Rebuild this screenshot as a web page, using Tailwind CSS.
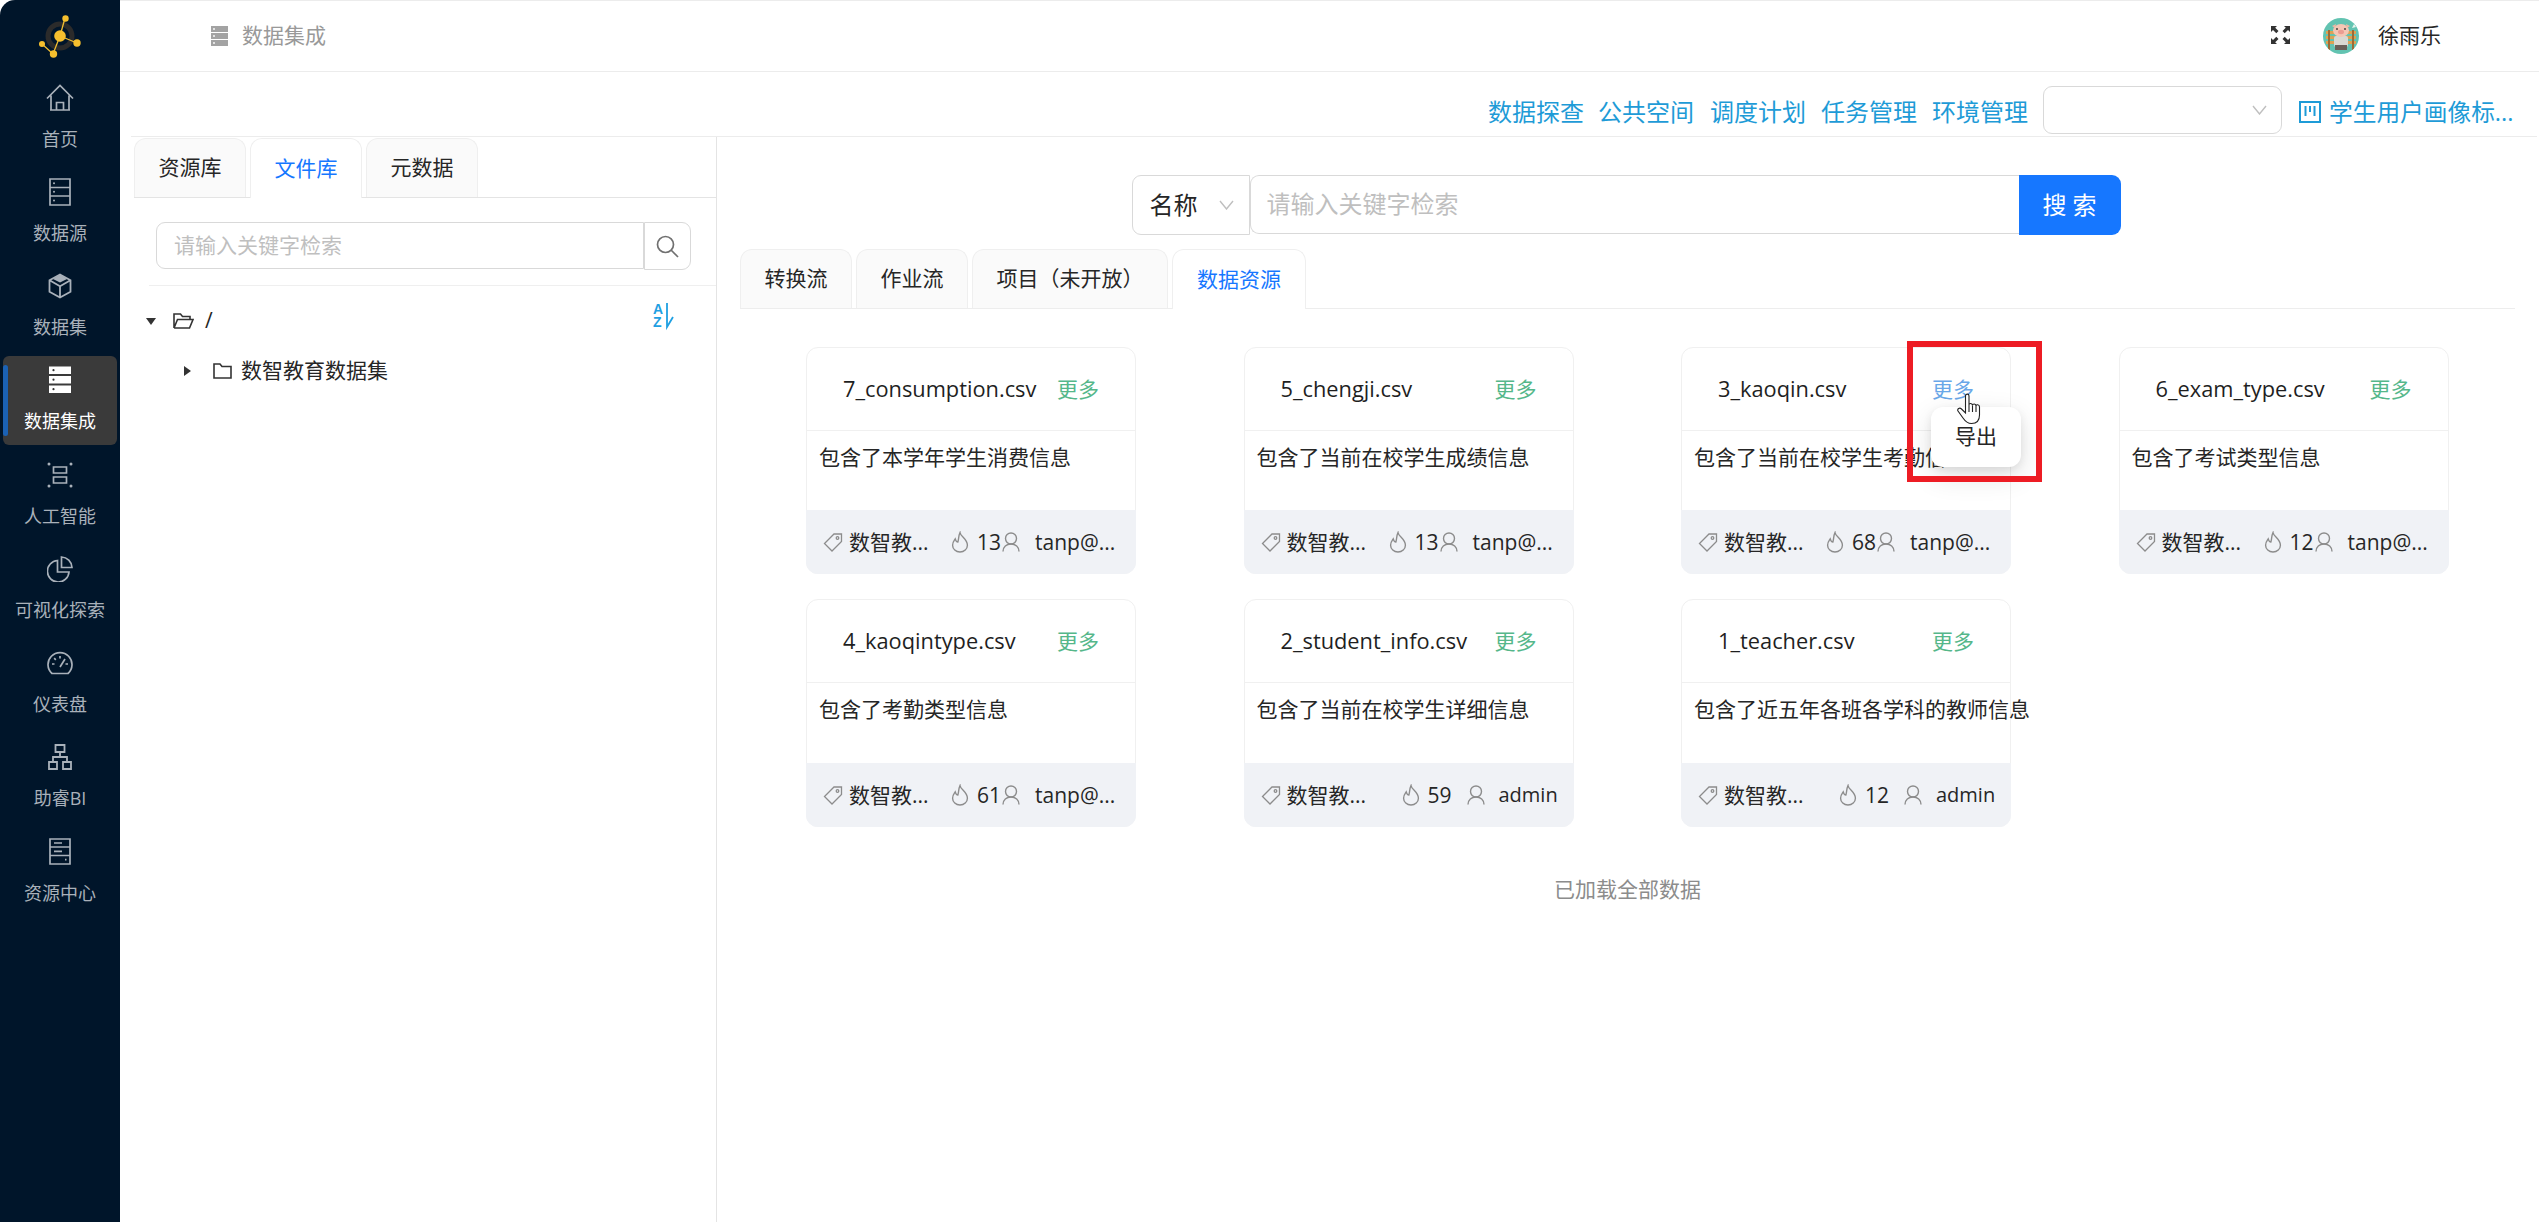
<!DOCTYPE html>
<html lang="zh">
<head>
<meta charset="utf-8">
<title>数据集成</title>
<script src="https://cdn.jsdelivr.net/npm/@tailwindcss/browser@4"></script>
</head>
<body class="bg-white">
<div class="flex w-[2539px] h-[1222px] overflow-hidden bg-white text-[21px] text-[#262626] font-['Open_Sans','Noto_Sans_CJK_SC',sans-serif]">

  <!-- Sidebar -->
  <aside class="relative w-[120px] shrink-0 h-full bg-[#00152a] rounded-tl-[15px] pt-[74px] flex flex-col items-center text-[18px] leading-[26px] text-[#a9b1ba]">
    <svg class="absolute left-[36px] top-[10px] w-[48px] h-[52px]" viewBox="36 10 48 52" fill="none">
      <circle cx="60" cy="36" r="12" stroke="#2b2b2b" stroke-width="5"/>
      <path d="M60 36L65 18M60 36L77 43M60 36L53 54L42 44" stroke="#f0bd32" stroke-width="1.3"/>
      <circle cx="60" cy="36" r="5.8" fill="#f5bf2e"/><circle cx="65.5" cy="18.5" r="3.2" fill="#f5bf2e"/><circle cx="77" cy="43" r="3.7" fill="#f5bf2e"/><circle cx="53.5" cy="54" r="3.7" fill="#f5bf2e"/><circle cx="42" cy="44" r="3" fill="#f5bf2e"/>
    </svg>

    <a class="w-[114px] h-[89px] mb-[5px] flex flex-col items-center">
      <svg class="w-[28px] h-[28px] mt-[10px]" viewBox="0 0 28 28" fill="none" stroke="#a9b1ba" stroke-width="1.7"><path d="M1 14.5L14 1.5L27 14.5M5 11.5V26H23V11.5M4 26H24M10.5 26V18.5H17.5V26"/></svg>
      <span class="mt-[14px]">首页</span>
    </a>
    <a class="w-[114px] h-[89px] mb-[5px] flex flex-col items-center">
      <svg class="w-[22px] h-[28px] mt-[10px]" viewBox="0 0 22 28" fill="none" stroke="#a9b1ba" stroke-width="1.7"><path d="M1 1H21V27H1ZM1 9.5H21M1 18H21"/><circle cx="5" cy="5.3" r="1" fill="#a9b1ba" stroke="none"/><circle cx="5" cy="13.8" r="1" fill="#a9b1ba" stroke="none"/><circle cx="5" cy="22.5" r="1" fill="#a9b1ba" stroke="none"/></svg>
      <span class="mt-[14px]">数据源</span>
    </a>
    <a class="w-[114px] h-[89px] mb-[5px] flex flex-col items-center">
      <svg class="w-[24px] h-[26px] mt-[11px]" viewBox="0 0 24 26" fill="none" stroke="#a9b1ba" stroke-width="1.8"><path d="M12 1.5L22.5 7.2V18.8L12 24.5L1.5 18.8V7.2ZM2 7.5L12 13.2L22 7.5M12 13V24"/><path d="M12 1.5L19 6L12 9.5L5 6Z" fill="#a9b1ba" stroke="none"/></svg>
      <span class="mt-[15px]">数据集</span>
    </a>
    <a class="relative w-[114px] h-[89px] mb-[6px] flex flex-col items-center bg-[#3a3a3a] rounded-[6px] text-white">
      <span class="absolute left-0 top-[9px] w-[5px] h-[71px] bg-[#1b62b5] rounded-[3px]"></span>
      <svg class="w-[22px] h-[28px] mt-[10px]" viewBox="0 0 22 28"><rect x="0" y="0.5" width="22" height="7.5" fill="#fff"/><rect x="0" y="10" width="22" height="7.5" fill="#fff"/><rect x="0" y="19.5" width="22" height="7.5" fill="#fff"/><circle cx="4.5" cy="4.2" r="1.1" fill="#333"/><circle cx="4.5" cy="13.7" r="1.1" fill="#333"/><circle cx="4.5" cy="23.2" r="1.1" fill="#333"/></svg>
      <span class="mt-[14px]">数据集成</span>
    </a>
    <a class="w-[114px] h-[89px] mb-[5px] flex flex-col items-center">
      <svg class="w-[26px] h-[26px] mt-[11px]" viewBox="0 0 26 26" fill="none" stroke="#a9b1ba" stroke-width="1.7"><circle cx="2" cy="2" r="1.5" fill="#a9b1ba" stroke="none"/><circle cx="24" cy="2" r="1.5" fill="#a9b1ba" stroke="none"/><circle cx="2" cy="24" r="1.5" fill="#a9b1ba" stroke="none"/><circle cx="24" cy="24" r="1.5" fill="#a9b1ba" stroke="none"/><path d="M6.5 5H19.5V11H6.5ZM6.5 15H19.5V21H6.5Z"/></svg>
      <span class="mt-[15px]">人工智能</span>
    </a>
    <a class="w-[114px] h-[89px] mb-[5px] flex flex-col items-center">
      <svg class="w-[26px] h-[26px] mt-[11px]" viewBox="0 0 26 26" fill="none" stroke="#a9b1ba" stroke-width="1.7"><path d="M10.5 4.5A10.8 10.8 0 1 0 22 16H10.5Z"/><path d="M14.5 1A11 11 0 0 1 25 11.5H14.5Z"/></svg>
      <span class="mt-[15px]">可视化探索</span>
    </a>
    <a class="w-[114px] h-[89px] mb-[5px] flex flex-col items-center">
      <svg class="w-[26px] h-[24px] mt-[12px]" viewBox="0 0 26 24" fill="none" stroke="#a9b1ba" stroke-width="1.7"><path d="M5 22.5A12 12 0 1 1 21 22.5Z"/><path d="M13 16L18 8M13 5V7.5M5 13H7.5M7.2 7.2L8.8 8.8M21 13H18.5"/></svg>
      <span class="mt-[16px]">仪表盘</span>
    </a>
    <a class="w-[114px] h-[89px] mb-[6px] flex flex-col items-center">
      <svg class="w-[24px] h-[26px] mt-[11px]" viewBox="0 0 24 26" fill="none" stroke="#a9b1ba" stroke-width="1.8"><path d="M7.5 1H16.5V8H7.5ZM1 18H9V25H1ZM15 18H23V25H15ZM12 8V13M5 18V13H19V18"/></svg>
      <span class="mt-[15px]">助睿BI</span>
    </a>
    <a class="w-[114px] h-[89px] flex flex-col items-center">
      <svg class="w-[22px] h-[27px] mt-[10px]" viewBox="0 0 22 27" fill="none" stroke="#a9b1ba" stroke-width="1.7"><path d="M1 1H21V26H1ZM1 9H21M1 17.5H21M5 5H13M5 13.3H13M16 21.7H17.5"/></svg>
      <span class="mt-[15px]">资源中心</span>
    </a>
  </aside>

  <!-- Main -->
  <div class="flex-1 min-w-0 flex flex-col">
    <!-- Header -->
    <header class="h-[72px] shrink-0 flex items-center border-t border-b border-[#ececec] pl-[91px]">
      <svg class="w-[17px] h-[20px] -mt-[1px]" viewBox="0 0 17 20"><rect y="0" width="17" height="6" fill="#a3a3a3"/><rect y="7" width="17" height="6" fill="#a3a3a3"/><rect y="14" width="17" height="6" fill="#a3a3a3"/><circle cx="3" cy="3" r="0.9" fill="#fff"/><circle cx="3" cy="10" r="0.9" fill="#fff"/><circle cx="3" cy="17" r="0.9" fill="#fff"/></svg>
      <span class="ml-[14px] text-[#999] -mt-[1px]">数据集成</span>
      <svg class="ml-auto w-[21px] h-[20px] -mt-[2px]" viewBox="0 0 21 20" fill="#333"><path d="M1 1H7L5.2 2.8L8.5 6.1L6.3 8.3L3 5L1 7ZM20 1H14L15.8 2.8L12.5 6.1L14.7 8.3L18 5L20 7ZM1 19H7L5.2 17.2L8.5 13.9L6.3 11.7L3 15L1 13ZM20 19H14L15.8 17.2L12.5 13.9L14.7 11.7L18 15L20 13Z"/></svg>
      <svg class="ml-[32px] w-[36px] h-[36px]" viewBox="0 0 36 36">
        <clipPath id="av"><circle cx="18" cy="18" r="18"/></clipPath>
        <g clip-path="url(#av)">
          <rect width="36" height="36" fill="#62c3b1"/>
          <path d="M31 6L33 9L29 10Z" fill="#e8f5ee"/>
          <rect x="3" y="13" width="30" height="3" fill="#dca254"/><rect x="3" y="18" width="30" height="3" fill="#dca254"/><rect x="3" y="23" width="30" height="3" fill="#dca254"/>
          <rect x="5" y="12" width="2" height="20" fill="#9e6a34"/><rect x="29" y="12" width="2" height="20" fill="#9e6a34"/>
          <rect x="11" y="18" width="14" height="11" rx="2" fill="#d9d9d2"/>
          <rect x="12" y="27" width="12" height="5" fill="#6a6058"/>
          <ellipse cx="18" cy="12.5" rx="8" ry="6.5" fill="#f4c6b4"/>
          <path d="M9 8L13 6L12 10Z M27 8L23 6L24 10Z" fill="#f0b6a3"/>
          <ellipse cx="18" cy="14" rx="3" ry="2.2" fill="#eb9d92"/>
          <circle cx="14" cy="11" r="0.9" fill="#333"/><circle cx="22" cy="11" r="0.9" fill="#333"/>
        </g>
      </svg>
      <span class="ml-[19px] mr-[98px]">徐雨乐</span>
    </header>

    <!-- Toolbar -->
    <div class="h-[65px] shrink-0 flex items-center justify-end ml-[11px] mr-[2px] pr-[23px] pt-[12px] border-b border-[#ececec] text-[24px] leading-[32px] text-[#1e9bd7]">
      <a class="mt-[3px]">数据探查</a><a class="ml-[14px] mt-[3px]">公共空间</a><a class="ml-[16px] mt-[3px]">调度计划</a><a class="ml-[15px] mt-[3px]">任务管理</a><a class="ml-[15px] mt-[3px]">环境管理</a>
      <div class="ml-[15px] w-[239px] h-[48px] border border-[#d9d9d9] rounded-[9px] flex items-center justify-end pr-[14px]">
        <svg class="w-[15px] h-[10px]" viewBox="0 0 15 10" fill="none" stroke="#bfbfbf" stroke-width="1.4"><path d="M1 1L7.5 9L14 1"/></svg>
      </div>
      <svg class="ml-[17px] mt-[3px] w-[22px] h-[22px]" viewBox="0 0 22 22" fill="none" stroke="#1e9bd7" stroke-width="2"><path d="M1 1H21V21H1ZM6.5 5V15M11 5V11M15.5 5V15"/></svg>
      <span class="ml-[8px] mt-[3px] w-[185px] whitespace-nowrap text-[23.7px]">学生用户画像标...</span>
    </div>

    <!-- Content -->
    <div class="flex-1 min-h-0 flex">
      <!-- Left panel -->
      <section class="w-[597px] shrink-0 border-r border-[#e4e4e4] pl-[14px] pt-[2px]">
        <div class="flex items-end h-[59px] border-b border-[#e4e4e4] gap-[4px]">
          <div class="w-[112px] h-[59px] flex items-center justify-center bg-[#fafafa] border border-b-0 border-[#efefef] rounded-t-[12px]">资源库</div>
          <div class="w-[112px] h-[60px] -mb-[1px] flex items-center justify-center bg-white border border-b-0 border-[#efefef] rounded-t-[12px] text-[#1677ff]">文件库</div>
          <div class="w-[112px] h-[59px] flex items-center justify-center bg-[#fafafa] border border-b-0 border-[#efefef] rounded-t-[12px]">元数据</div>
        </div>
        <div class="ml-[22px] w-[535px] h-[48px] mt-[24px] flex">
          <div class="flex-1 h-[47px] border border-[#d9d9d9] rounded-l-[9px] pl-[17px] flex items-center text-[#bfbfbf]">请输入关键字检索</div>
          <div class="w-[47px] h-[48px] border border-l border-[#d9d9d9] rounded-r-[9px] flex items-center justify-center">
            <svg class="w-[23px] h-[23px]" viewBox="0 0 23 23" fill="none" stroke="#707070" stroke-width="1.7"><circle cx="9.5" cy="9.5" r="8"/><path d="M15 15L22 22"/></svg>
          </div>
        </div>
        <div class="ml-[15px] mt-[15px] border-t border-[#efefef]"></div>
        <div class="relative">
          <div class="flex items-center h-[28px] mt-[21px]">
            <span class="ml-[12px] w-0 h-0 border-x-[5.5px] border-x-transparent border-t-[7px] border-t-[#333]"></span>
            <svg class="ml-[17px] w-[21px] h-[16px]" viewBox="0 0 21 16" fill="none" stroke="#333" stroke-width="1.6"><path d="M1 15V1H7.5L9.5 3.5H17V6.5M1 15H16.5L20 6.5H4.5L1 15"/></svg>
            <span class="ml-[11px]">/</span>
          </div>
          <svg class="absolute left-[519px] -top-[5px] w-[24px] h-[26px] overflow-visible" viewBox="0 0 24 26">
            <text x="0" y="11.5" font-size="14" font-family="Liberation Sans" font-weight="700" fill="#1fa0e2">A</text>
            <text x="0" y="25" font-size="14" font-family="Liberation Sans" font-weight="700" fill="#1fa0e2">Z</text>
            <path d="M14 1V25L20 15" fill="none" stroke="#1fa0e2" stroke-width="1.8"/>
          </svg>
          <div class="flex items-center h-[28px] mt-[22px]">
            <span class="ml-[50px] w-0 h-0 border-y-[5.5px] border-y-transparent border-l-[7px] border-l-[#333]"></span>
            <svg class="ml-[22px] w-[19px] h-[16px]" viewBox="0 0 19 16" fill="none" stroke="#333" stroke-width="1.6"><path d="M1 1H7L9 3.5H18V15H1Z"/></svg>
            <span class="ml-[9px]">数智教育数据集</span>
          </div>
        </div>
      </section>

      <!-- Right panel -->
      <section class="flex-1 min-w-0 flex flex-col items-start pl-[23px] pr-[24px]">
        <div class="self-center -ml-[3px] mt-[38px] flex h-[60px] text-[24px]">
          <div class="w-[118px] h-[60px] border border-[#d9d9d9] rounded-l-[9px] flex items-center pl-[17px]">
            <span>名称</span>
            <svg class="ml-[21px] w-[15px] h-[10px]" viewBox="0 0 15 10" fill="none" stroke="#bfbfbf" stroke-width="1.4"><path d="M1 1L7.5 9L14 1"/></svg>
          </div>
          <div class="w-[769px] h-[59px] border border-[#d9d9d9] border-r-0 rounded-l-[9px] flex items-center pl-[16px] pb-[2px] text-[#bfbfbf]">请输入关键字检索</div>
          <div class="w-[102px] h-[60px] bg-[#1677ff] text-white rounded-r-[9px] flex items-center justify-center tracking-[6px] pl-[6px]">搜索</div>
        </div>

        <div class="w-full flex items-end h-[59px] mt-[15px] border-b border-[#ededed] gap-[4px]">
          <div class="w-[112px] h-[59px] flex items-center justify-center bg-[#fafafa] border border-b-0 border-[#efefef] rounded-t-[12px]">转换流</div>
          <div class="w-[112px] h-[59px] flex items-center justify-center bg-[#fafafa] border border-b-0 border-[#efefef] rounded-t-[12px]">作业流</div>
          <div class="w-[196px] h-[59px] flex items-center justify-center bg-[#fafafa] border border-b-0 border-[#efefef] rounded-t-[12px]">项目（未开放）</div>
          <div class="w-[134px] h-[60px] -mb-[1px] flex items-center justify-center bg-white border border-b-0 border-[#efefef] rounded-t-[12px] text-[#1677ff]">数据资源</div>
        </div>

        <div class="ml-[66px] mt-[38px] grid grid-cols-[repeat(4,330px)] gap-x-[107.5px] gap-y-[25px] leading-[28px]">

          <!-- card -->
          <article class="h-[227px] flex flex-col border border-[#f0f0f0] rounded-[12px]">
            <div class="h-[83px] shrink-0 flex items-center border-b border-[#f0f0f0]"><span class="w-[250px] pl-[36px] whitespace-nowrap text-[#1f1f1f] text-[21.8px]">7_consumption.csv</span><a class="text-[#55b78a]">更多</a></div>
            <p class="flex-1 pl-[12px] pt-[12px] whitespace-nowrap">包含了本学年学生消费信息</p>
            <div class="h-[64px] shrink-0 -mx-px -mb-px bg-[#f0f2f6] rounded-b-[12px] flex items-center pl-[17px]">
              <svg class="w-[20px] h-[19px]" viewBox="0 0 19 19" fill="none" stroke="#8c8c8c" stroke-width="1.3"><path d="M10.5 1H18V8.5L8.5 18L1 10.5Z"/><circle cx="14" cy="5" r="1.3"/></svg>
              <span class="ml-[6px] w-[77px] whitespace-nowrap">数智教...</span>
              <svg class="ml-[25px] -mt-[1px] w-[18px] h-[22px]" viewBox="0 0 17 20" fill="none" stroke="#8c8c8c" stroke-width="1.3"><path d="M8.5 1C9 5 15.5 7 15.5 13A7 6.5 0 0 1 1.5 13C1.5 10 3 8.5 4 7C4.5 9 5.5 10 6.5 10C7.5 7 7 4 8.5 1Z"/></svg>
              <span class="ml-[8px] w-[21px]">13</span>
              <svg class="ml-[4px] -mt-[1px] w-[18px] h-[20px]" viewBox="0 0 18 20" fill="none" stroke="#8c8c8c" stroke-width="1.4"><circle cx="9" cy="6.5" r="5.5"/><path d="M1 19.5C1 15 4.5 12 9 12C13.5 12 17 15 17 19.5"/></svg>
              <span class="ml-[15px] whitespace-nowrap">tanp@...</span>
            </div>
          </article>

          <article class="h-[227px] flex flex-col border border-[#f0f0f0] rounded-[12px]">
            <div class="h-[83px] shrink-0 flex items-center border-b border-[#f0f0f0]"><span class="w-[250px] pl-[36px] whitespace-nowrap text-[#1f1f1f] text-[21.8px]">5_chengji.csv</span><a class="text-[#55b78a]">更多</a></div>
            <p class="flex-1 pl-[12px] pt-[12px] whitespace-nowrap">包含了当前在校学生成绩信息</p>
            <div class="h-[64px] shrink-0 -mx-px -mb-px bg-[#f0f2f6] rounded-b-[12px] flex items-center pl-[17px]">
              <svg class="w-[20px] h-[19px]" viewBox="0 0 19 19" fill="none" stroke="#8c8c8c" stroke-width="1.3"><path d="M10.5 1H18V8.5L8.5 18L1 10.5Z"/><circle cx="14" cy="5" r="1.3"/></svg>
              <span class="ml-[6px] w-[77px] whitespace-nowrap">数智教...</span>
              <svg class="ml-[25px] -mt-[1px] w-[18px] h-[22px]" viewBox="0 0 17 20" fill="none" stroke="#8c8c8c" stroke-width="1.3"><path d="M8.5 1C9 5 15.5 7 15.5 13A7 6.5 0 0 1 1.5 13C1.5 10 3 8.5 4 7C4.5 9 5.5 10 6.5 10C7.5 7 7 4 8.5 1Z"/></svg>
              <span class="ml-[8px] w-[21px]">13</span>
              <svg class="ml-[4px] -mt-[1px] w-[18px] h-[20px]" viewBox="0 0 18 20" fill="none" stroke="#8c8c8c" stroke-width="1.4"><circle cx="9" cy="6.5" r="5.5"/><path d="M1 19.5C1 15 4.5 12 9 12C13.5 12 17 15 17 19.5"/></svg>
              <span class="ml-[15px] whitespace-nowrap">tanp@...</span>
            </div>
          </article>

          <article class="relative h-[227px] flex flex-col border border-[#f0f0f0] rounded-[12px]">
            <div class="h-[83px] shrink-0 flex items-center border-b border-[#f0f0f0]"><span class="w-[250px] pl-[36px] whitespace-nowrap text-[#1f1f1f] text-[21.8px]">3_kaoqin.csv</span><a class="text-[#69a7e8]">更多</a></div>
            <p class="flex-1 pl-[12px] pt-[12px] whitespace-nowrap">包含了当前在校学生考勤信息</p>
            <div class="h-[64px] shrink-0 -mx-px -mb-px bg-[#f0f2f6] rounded-b-[12px] flex items-center pl-[17px]">
              <svg class="w-[20px] h-[19px]" viewBox="0 0 19 19" fill="none" stroke="#8c8c8c" stroke-width="1.3"><path d="M10.5 1H18V8.5L8.5 18L1 10.5Z"/><circle cx="14" cy="5" r="1.3"/></svg>
              <span class="ml-[6px] w-[77px] whitespace-nowrap">数智教...</span>
              <svg class="ml-[25px] -mt-[1px] w-[18px] h-[22px]" viewBox="0 0 17 20" fill="none" stroke="#8c8c8c" stroke-width="1.3"><path d="M8.5 1C9 5 15.5 7 15.5 13A7 6.5 0 0 1 1.5 13C1.5 10 3 8.5 4 7C4.5 9 5.5 10 6.5 10C7.5 7 7 4 8.5 1Z"/></svg>
              <span class="ml-[8px] w-[21px]">68</span>
              <svg class="ml-[4px] -mt-[1px] w-[18px] h-[20px]" viewBox="0 0 18 20" fill="none" stroke="#8c8c8c" stroke-width="1.4"><circle cx="9" cy="6.5" r="5.5"/><path d="M1 19.5C1 15 4.5 12 9 12C13.5 12 17 15 17 19.5"/></svg>
              <span class="ml-[15px] whitespace-nowrap">tanp@...</span>
            </div>
            <!-- popover + annotation -->
            <div class="absolute left-[249px] top-[59px] w-[90px] h-[60px] pb-[2px] bg-white rounded-[12px] shadow-[0_9px_28px_rgba(0,0,0,0.12),0_3px_9px_rgba(0,0,0,0.08)] flex items-center justify-center z-10">导出</div>
            <div class="absolute left-[225px] -top-[7px] w-[135px] h-[141px] border-[6px] border-[#ed1c24] z-20"></div>
            <svg class="absolute left-[275px] top-[45px] w-[26px] h-[32px] z-30" viewBox="0 0 26 32" fill="#fff" stroke="#222" stroke-width="1.1"><path d="M8.5 3C8.5 0.5 12 0.5 12 3V12C12 10 15.5 10 15.5 12.5C15.5 10.5 19 10.5 19 13C19 11 22.5 11.5 22.5 14V22C22.5 27 20 30.5 14.5 30.5C10 30.5 8 28 6 25L1 18C0 16 2.5 14 4.5 16L8.5 20Z"/><path d="M12 12V19M15.5 12.5V19M19 13V19" fill="none"/></svg>
          </article>

          <article class="h-[227px] flex flex-col border border-[#f0f0f0] rounded-[12px]">
            <div class="h-[83px] shrink-0 flex items-center border-b border-[#f0f0f0]"><span class="w-[250px] pl-[36px] whitespace-nowrap text-[#1f1f1f] text-[21.8px]">6_exam_type.csv</span><a class="text-[#55b78a]">更多</a></div>
            <p class="flex-1 pl-[12px] pt-[12px] whitespace-nowrap">包含了考试类型信息</p>
            <div class="h-[64px] shrink-0 -mx-px -mb-px bg-[#f0f2f6] rounded-b-[12px] flex items-center pl-[17px]">
              <svg class="w-[20px] h-[19px]" viewBox="0 0 19 19" fill="none" stroke="#8c8c8c" stroke-width="1.3"><path d="M10.5 1H18V8.5L8.5 18L1 10.5Z"/><circle cx="14" cy="5" r="1.3"/></svg>
              <span class="ml-[6px] w-[77px] whitespace-nowrap">数智教...</span>
              <svg class="ml-[25px] -mt-[1px] w-[18px] h-[22px]" viewBox="0 0 17 20" fill="none" stroke="#8c8c8c" stroke-width="1.3"><path d="M8.5 1C9 5 15.5 7 15.5 13A7 6.5 0 0 1 1.5 13C1.5 10 3 8.5 4 7C4.5 9 5.5 10 6.5 10C7.5 7 7 4 8.5 1Z"/></svg>
              <span class="ml-[8px] w-[21px]">12</span>
              <svg class="ml-[4px] -mt-[1px] w-[18px] h-[20px]" viewBox="0 0 18 20" fill="none" stroke="#8c8c8c" stroke-width="1.4"><circle cx="9" cy="6.5" r="5.5"/><path d="M1 19.5C1 15 4.5 12 9 12C13.5 12 17 15 17 19.5"/></svg>
              <span class="ml-[15px] whitespace-nowrap">tanp@...</span>
            </div>
          </article>

          <article class="h-[228px] flex flex-col border border-[#f0f0f0] rounded-[12px]">
            <div class="h-[83px] shrink-0 flex items-center border-b border-[#f0f0f0]"><span class="w-[250px] pl-[36px] whitespace-nowrap text-[#1f1f1f] text-[21.8px]">4_kaoqintype.csv</span><a class="text-[#55b78a]">更多</a></div>
            <p class="flex-1 pl-[12px] pt-[12px] whitespace-nowrap">包含了考勤类型信息</p>
            <div class="h-[64px] shrink-0 -mx-px -mb-px bg-[#f0f2f6] rounded-b-[12px] flex items-center pl-[17px]">
              <svg class="w-[20px] h-[19px]" viewBox="0 0 19 19" fill="none" stroke="#8c8c8c" stroke-width="1.3"><path d="M10.5 1H18V8.5L8.5 18L1 10.5Z"/><circle cx="14" cy="5" r="1.3"/></svg>
              <span class="ml-[6px] w-[77px] whitespace-nowrap">数智教...</span>
              <svg class="ml-[25px] -mt-[1px] w-[18px] h-[22px]" viewBox="0 0 17 20" fill="none" stroke="#8c8c8c" stroke-width="1.3"><path d="M8.5 1C9 5 15.5 7 15.5 13A7 6.5 0 0 1 1.5 13C1.5 10 3 8.5 4 7C4.5 9 5.5 10 6.5 10C7.5 7 7 4 8.5 1Z"/></svg>
              <span class="ml-[8px] w-[21px]">61</span>
              <svg class="ml-[4px] -mt-[1px] w-[18px] h-[20px]" viewBox="0 0 18 20" fill="none" stroke="#8c8c8c" stroke-width="1.4"><circle cx="9" cy="6.5" r="5.5"/><path d="M1 19.5C1 15 4.5 12 9 12C13.5 12 17 15 17 19.5"/></svg>
              <span class="ml-[15px] whitespace-nowrap">tanp@...</span>
            </div>
          </article>

          <article class="h-[228px] flex flex-col border border-[#f0f0f0] rounded-[12px]">
            <div class="h-[83px] shrink-0 flex items-center border-b border-[#f0f0f0]"><span class="w-[250px] pl-[36px] whitespace-nowrap text-[#1f1f1f] text-[21.8px]">2_student_info.csv</span><a class="text-[#55b78a]">更多</a></div>
            <p class="flex-1 pl-[12px] pt-[12px] whitespace-nowrap">包含了当前在校学生详细信息</p>
            <div class="h-[64px] shrink-0 -mx-px -mb-px bg-[#f0f2f6] rounded-b-[12px] flex items-center pl-[17px]">
              <svg class="w-[20px] h-[19px]" viewBox="0 0 19 19" fill="none" stroke="#8c8c8c" stroke-width="1.3"><path d="M10.5 1H18V8.5L8.5 18L1 10.5Z"/><circle cx="14" cy="5" r="1.3"/></svg>
              <span class="ml-[6px] w-[77px] whitespace-nowrap">数智教...</span>
              <svg class="ml-[38px] -mt-[1px] w-[18px] h-[22px]" viewBox="0 0 17 20" fill="none" stroke="#8c8c8c" stroke-width="1.3"><path d="M8.5 1C9 5 15.5 7 15.5 13A7 6.5 0 0 1 1.5 13C1.5 10 3 8.5 4 7C4.5 9 5.5 10 6.5 10C7.5 7 7 4 8.5 1Z"/></svg>
              <span class="ml-[8px] w-[22px]">59</span>
              <svg class="ml-[17px] -mt-[1px] w-[18px] h-[20px]" viewBox="0 0 18 20" fill="none" stroke="#8c8c8c" stroke-width="1.4"><circle cx="9" cy="6.5" r="5.5"/><path d="M1 19.5C1 15 4.5 12 9 12C13.5 12 17 15 17 19.5"/></svg>
              <span class="ml-[14px] whitespace-nowrap text-[20px]">admin</span>
            </div>
          </article>

          <article class="h-[228px] flex flex-col border border-[#f0f0f0] rounded-[12px]">
            <div class="h-[83px] shrink-0 flex items-center border-b border-[#f0f0f0]"><span class="w-[250px] pl-[36px] whitespace-nowrap text-[#1f1f1f] text-[21.8px]">1_teacher.csv</span><a class="text-[#55b78a]">更多</a></div>
            <p class="flex-1 pl-[12px] pt-[12px] whitespace-nowrap">包含了近五年各班各学科的教师信息</p>
            <div class="h-[64px] shrink-0 -mx-px -mb-px bg-[#f0f2f6] rounded-b-[12px] flex items-center pl-[17px]">
              <svg class="w-[20px] h-[19px]" viewBox="0 0 19 19" fill="none" stroke="#8c8c8c" stroke-width="1.3"><path d="M10.5 1H18V8.5L8.5 18L1 10.5Z"/><circle cx="14" cy="5" r="1.3"/></svg>
              <span class="ml-[6px] w-[77px] whitespace-nowrap">数智教...</span>
              <svg class="ml-[38px] -mt-[1px] w-[18px] h-[22px]" viewBox="0 0 17 20" fill="none" stroke="#8c8c8c" stroke-width="1.3"><path d="M8.5 1C9 5 15.5 7 15.5 13A7 6.5 0 0 1 1.5 13C1.5 10 3 8.5 4 7C4.5 9 5.5 10 6.5 10C7.5 7 7 4 8.5 1Z"/></svg>
              <span class="ml-[8px] w-[22px]">12</span>
              <svg class="ml-[17px] -mt-[1px] w-[18px] h-[20px]" viewBox="0 0 18 20" fill="none" stroke="#8c8c8c" stroke-width="1.4"><circle cx="9" cy="6.5" r="5.5"/><path d="M1 19.5C1 15 4.5 12 9 12C13.5 12 17 15 17 19.5"/></svg>
              <span class="ml-[14px] whitespace-nowrap text-[20px]">admin</span>
            </div>
          </article>
        </div>

        <p class="w-full text-center mt-[48px] leading-[28px] text-[#8c8c8c]">已加载全部数据</p>
      </section>
    </div>
  </div>
</div>
</body>
</html>
